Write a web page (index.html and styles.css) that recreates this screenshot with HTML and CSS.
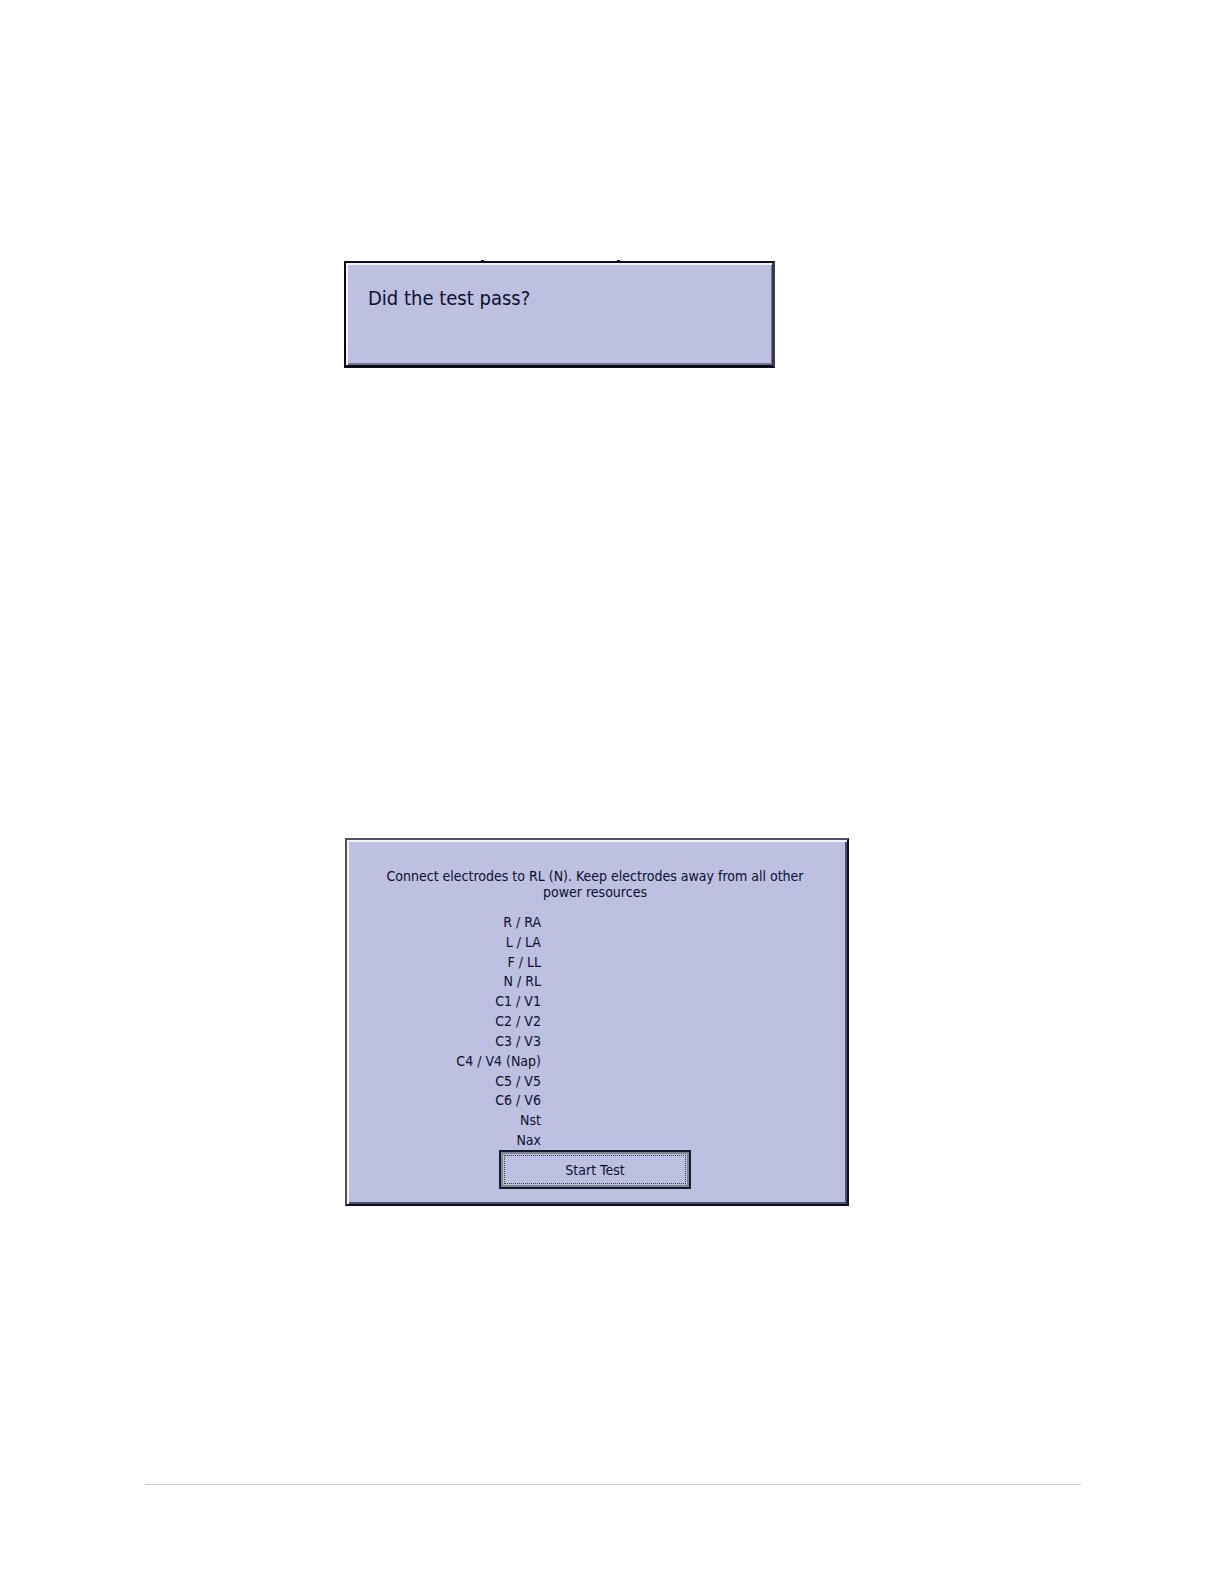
FILE: index.html
```
<!DOCTYPE html>
<html lang="en">
<head>
<meta charset="utf-8">
<title>ECG tests</title>
<link rel="stylesheet" href="styles.css">
</head>
<body>
<main class="page">
  <section class="panel question">
    <span class="tick tick-left"></span>
    <span class="tick tick-right"></span>
    <p class="question-text">Did the test pass?</p>
  </section>
  <section class="panel leads">
    <p class="instruction">Connect electrodes to RL (N). Keep electrodes away from all other power resources</p>
    <ul class="lead-list">
      <li>R / RA</li>
      <li>L / LA</li>
      <li>F / LL</li>
      <li>N / RL</li>
      <li>C1 / V1</li>
      <li>C2 / V2</li>
      <li>C3 / V3</li>
      <li>C4 / V4 (Nap)</li>
      <li>C5 / V5</li>
      <li>C6 / V6</li>
      <li>Nst</li>
      <li>Nax</li>
    </ul>
    <button class="start" type="button"><span class="start-label">Start Test</span></button>
  </section>
  <hr class="rule">
</main>
</body>
</html>
```
FILE: styles.css
```
* {
  box-sizing: border-box;
}

body {
  margin: 0;
  background: #fff;
  color: #0c0f2e;
  font-family: "DejaVu Sans Condensed", "Noto Sans", sans-serif;
  font-size: 14px;
  line-height: 16px;
}

.page {
  display: flex;
  flex-direction: column;
  min-height: 100vh;
  padding: 261px 143px 99px 145px;
}

.panel {
  margin-left: 200px;
  background: #bdc0e0;
  border-style: solid;
  border-width: 2px 3px 3px 2px;
}

.question {
  position: relative;
  max-width: 431px;
  min-height: 107px;
  margin-left: 199px;
  padding: 23px 22px;
  border-color: #0a0a20 #383c50 #0a0a18 #0a0a20;
  box-shadow: inset 2px 2px #f4f2fc, inset -1px -2px #70748e;
}

.question-text {
  margin: 0;
  font-size: 20px;
  line-height: 24px;
}

.tick {
  position: absolute;
  top: -3px;
  width: 3px;
  height: 2px;
  background: #0a0a20;
}

.tick-left {
  left: 135px;
}

.tick-right {
  left: 271px;
}

.leads {
  display: flex;
  flex-direction: column;
  max-width: 504px;
  margin-top: 470px;
  padding: 28px 38px 15px 34px;
  border-width: 2px;
  border-color: #50506e #101024 #101024 #50506e;
  box-shadow: inset 2px 2px #f4f2fc, inset -2px -2px #4c4e6c;
}

.instruction {
  margin: 0 0 12px;
  text-align: center;
}

.lead-list {
  display: grid;
  grid-auto-rows: 1fr;
  align-items: center;
  width: 160px;
  height: 238px;
  margin: 0;
  padding: 0;
  list-style: none;
  text-align: right;
}

.start {
  display: flex;
  align-self: center;
  width: 192px;
  height: 39px;
  padding: 3px;
  border: 2px solid #141a2c;
  background: #bdc0e0;
  box-shadow: inset 0 0 0 2px #7c8690;
  color: inherit;
  font: inherit;
}

.start-label {
  display: flex;
  flex: 1;
  align-items: center;
  justify-content: center;
  align-self: stretch;
  border: 1px dotted #33384c;
}

.rule {
  width: 100%;
  margin: auto 0 0;
  border: 0;
  border-top: 1px solid #ccc;
}
```
